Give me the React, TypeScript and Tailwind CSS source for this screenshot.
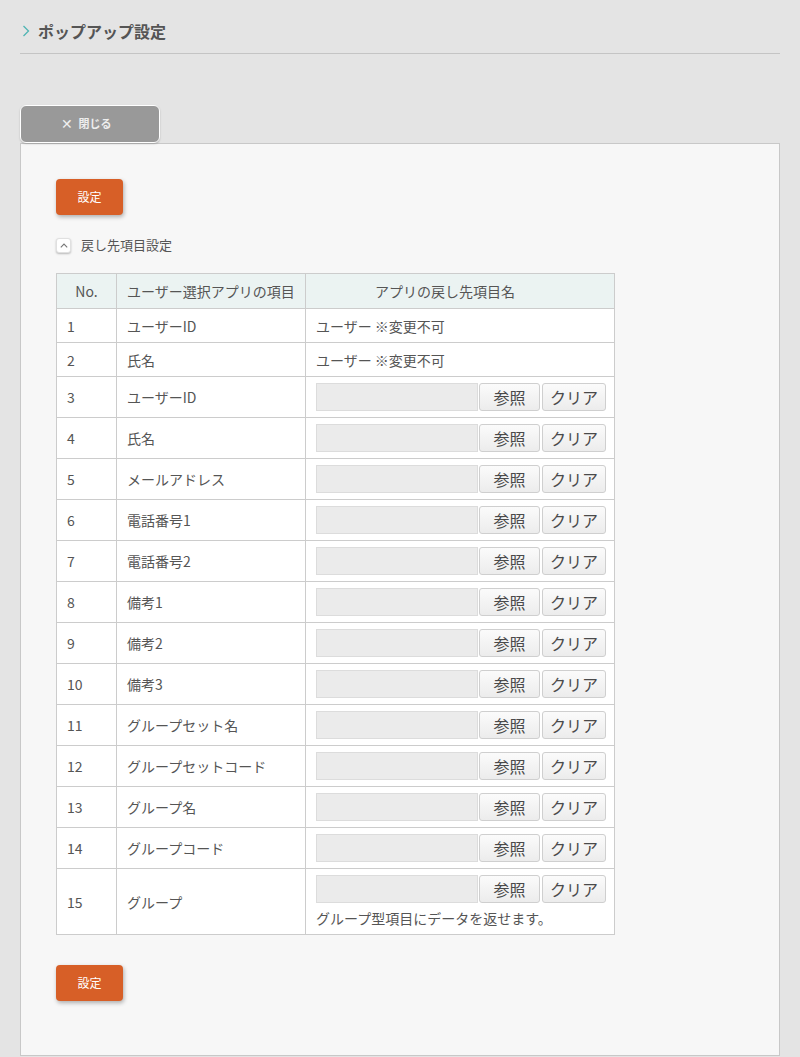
const jp = { fontFamily: '"Noto Sans CJK JP", "Noto Sans", sans-serif' }

type Row = { no: number; name: string; fixed?: boolean; note?: string }

const rows: Row[] = [
    { no: 1, name: 'ユーザーID', fixed: true },
    { no: 2, name: '氏名', fixed: true },
    { no: 3, name: 'ユーザーID' },
    { no: 4, name: '氏名' },
    { no: 5, name: 'メールアドレス' },
    { no: 6, name: '電話番号1' },
    { no: 7, name: '電話番号2' },
    { no: 8, name: '備考1' },
    { no: 9, name: '備考2' },
    { no: 10, name: '備考3' },
    { no: 11, name: 'グループセット名' },
    { no: 12, name: 'グループセットコード' },
    { no: 13, name: 'グループ名' },
    { no: 14, name: 'グループコード' },
    { no: 15, name: 'グループ', note: 'グループ型項目にデータを返せます。' },
]

const SubmitButton = () => (
    <button
        type="button"
        className="h-[36px] w-[67px] rounded-[4px] bg-[#d75f27] text-[12px] text-white shadow-[1px_2px_4px_rgba(0,0,0,0.3)]"
    >
        設定
    </button>
)

const SmallButton = ({ label, width }: { label: string; width: string }) => (
    <button
        type="button"
        className={`${width} h-[28px] shrink-0 rounded-[3px] border border-[#cfcfcf] bg-gradient-to-b from-[#fbfbfb] to-[#ececec] text-[16px] leading-none text-[#4a4a4a]`}
    >
        {label}
    </button>
)

const ReturnCell = ({ row }: { row: Row }) => {
    if (row.fixed) return <span>ユーザー ※変更不可</span>
    return (
        <div className="flex flex-col">
            <div className="flex items-center">
                <input
                    readOnly
                    className="h-[28px] w-[162px] shrink-0 border border-[#dcdcdc] bg-[#ebebeb] outline-none"
                />
                <div className="ml-[1px] flex gap-[2px]">
                    <SmallButton label="参照" width="w-[61px]" />
                    <SmallButton label="クリア" width="w-[64px]" />
                </div>
            </div>
            {row.note && <p className="mt-[5px] leading-[20px]">{row.note}</p>}
        </div>
    )
}

export default function App() {
    return (
        <div className="min-h-[1057px] bg-[#e4e4e4] px-[20px] text-[#555]" style={jp}>
            {/* page title */}
            <div className="flex h-[54px] items-center gap-[8px] border-b border-[#c4c4c4] pt-[8px] pl-[2px]">
                <svg width="8" height="12" viewBox="0 0 8 12" fill="none">
                    <path d="M1.5 1 L6.5 6 L1.5 11" stroke="#4fb5b3" strokeWidth="1.3" />
                </svg>
                <h1 className="text-[16px] font-bold leading-none text-[#555]">ポップアップ設定</h1>
            </div>

            {/* close tab */}
            <div className="mt-[51px] flex">
                <button
                    type="button"
                    className="flex h-[38px] w-[140px] items-center justify-center gap-[6px] rounded-[6px] border border-white bg-[#999] pb-[2px] pr-[8px] text-[11px] font-bold text-[#eee] shadow-[0_1px_2px_rgba(0,0,0,0.2)]"
                >
                    <span className="text-[14px] font-normal">✕</span>
                    閉じる
                </button>
            </div>

            {/* panel */}
            <div className="border border-[#c8c8c8] bg-[#f7f7f7] px-[35px] pt-[35px] pb-[54px]">
                <SubmitButton />

                <div className="mt-[22px] flex items-center gap-[10px]">
                    <span className="flex h-[15px] w-[15px] items-center justify-center rounded-[3px] border border-[#e0e0e0] bg-white shadow-[0_1px_2px_rgba(0,0,0,0.25)]">
                        <svg width="8" height="5" viewBox="0 0 8 5" fill="none">
                            <path d="M0.8 4.3 L4 1 L7.2 4.3" stroke="#777" strokeWidth="1.1" />
                        </svg>
                    </span>
                    <span className="text-[13px] leading-[16px]">戻し先項目設定</span>
                </div>

                <table className="mt-[20px] w-[558px] table-fixed border-collapse bg-white text-[14px] leading-[20px]">
                    <colgroup>
                        <col className="w-[60px]" />
                        <col className="w-[189px]" />
                        <col className="w-[309px]" />
                    </colgroup>
                    <thead>
                        <tr className="h-[35px] bg-[#ebf3f2]">
                            <th className="border border-[#ccc] text-center font-normal">No.</th>
                            <th className="border border-[#ccc] px-[10px] text-left font-normal">
                                ユーザー選択アプリの項目
                            </th>
                            <th className="border border-[#ccc] pl-[69px] text-left font-normal">
                                アプリの戻し先項目名
                            </th>
                        </tr>
                    </thead>
                    <tbody>
                        {rows.map((row) => (
                            <tr key={row.no} className={row.fixed ? 'h-[34px]' : ''}>
                                <td className="border border-[#ccc] px-[10px]">{row.no}</td>
                                <td className="border border-[#ccc] px-[10px]">{row.name}</td>
                                <td className="border border-[#ccc] py-[6px] pr-[6px] pl-[10px]">
                                    <ReturnCell row={row} />
                                </td>
                            </tr>
                        ))}
                    </tbody>
                </table>

                <div className="mt-[30px]">
                    <SubmitButton />
                </div>
            </div>
        </div>
    )
}
